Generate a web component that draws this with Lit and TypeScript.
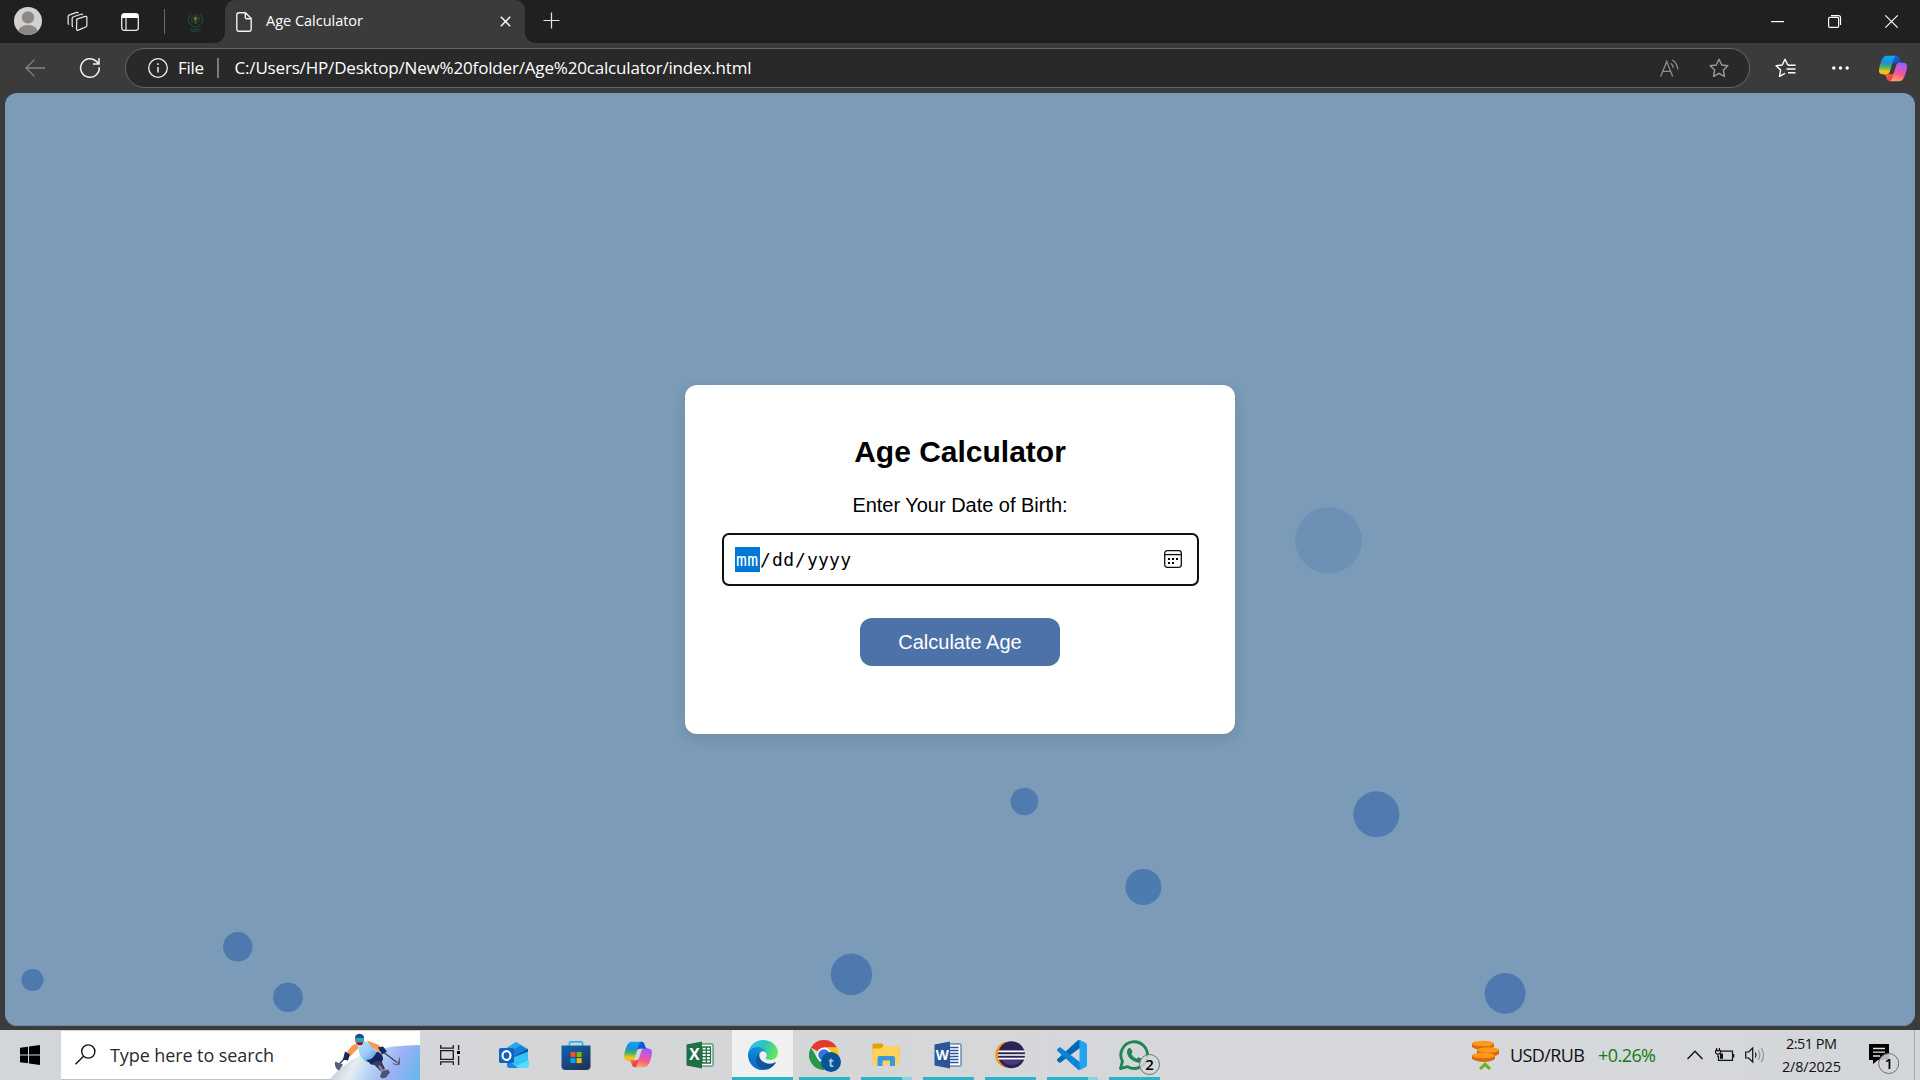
import { LitElement, html, css, svg } from "lit";
import { customElement, property, state } from "lit/decorators.js";
import { styleMap } from "lit/directives/style-map.js";
import { classMap } from "lit/directives/class-map.js";

/** One line of text tracked so that it spans an exact width. */
@customElement("fit-text")
class FitText extends LitElement {
  static styles = css`
    :host { display: block; flex: none; white-space: pre; }
    .box { display: block; }
    .run { display: inline-block; }
  `;
  @property() text = "";
  @property({ type: Number }) width = 0;
  @state() private tracking = 0;

  firstUpdated() {
    const run = this.renderRoot.querySelector(".run") as HTMLElement;
    const natural = run.getBoundingClientRect().width;
    this.tracking = (this.width - natural) / Math.max(1, this.text.length - 1);
  }
  render() {
    return html`<span class="box" style=${styleMap({ width: this.width + "px" })}
      ><span class="run" style=${styleMap({ letterSpacing: this.tracking + "px" })}>${this.text}</span></span>`;
  }
}

const copilot = (id: string) => html`
  <svg class="copilot" viewBox="2 3 44 42">
    <defs>
      <linearGradient id="${id}a" x1=".3" y1="0" x2=".25" y2="1">
        <stop offset="0" stop-color="#12a5f0" /><stop offset=".35" stop-color="#1c8fd8" />
        <stop offset=".6" stop-color="#45b06a" /><stop offset=".85" stop-color="#f0c814" /><stop offset="1" stop-color="#f7b314" />
      </linearGradient>
      <linearGradient id="${id}b" x1=".6" y1="0" x2=".35" y2="1">
        <stop offset="0" stop-color="#a05bee" /><stop offset=".25" stop-color="#c459d8" />
        <stop offset=".6" stop-color="#f4588c" /><stop offset="1" stop-color="#ffa45e" />
      </linearGradient>
      <linearGradient id="${id}c" x1="0" y1="0" x2="1" y2="1">
        <stop offset="0" stop-color="#1268d8" /><stop offset="1" stop-color="#1b3fc4" />
      </linearGradient>
      <linearGradient id="${id}d" x1="0" y1="0" x2="1" y2="1">
        <stop offset="0" stop-color="#fba03a" /><stop offset=".6" stop-color="#ee4a3d" /><stop offset="1" stop-color="#d83a6a" />
      </linearGradient>
    </defs>
    <path fill="url(#${id}c)" d="M34.142 7.325A4.63 4.63 0 0 0 29.7 4h-1.35a4.63 4.63 0 0 0-4.554 3.794L21.48 20.407l.575-1.965a4.63 4.63 0 0 1 4.444-3.33h7.853l3.294 1.282 3.175-1.283h-.926a4.63 4.63 0 0 1-4.443-3.325z" />
    <path fill="url(#${id}d)" d="M14.33 40.656A4.63 4.63 0 0 0 18.779 44h2.87a4.63 4.63 0 0 0 4.629-4.51l.312-12.163-.654 2.233a4.63 4.63 0 0 1-4.443 3.329h-7.919l-2.823-1.532-3.057 1.532h.912a4.63 4.63 0 0 1 4.447 3.344z" />
    <path fill="url(#${id}a)" d="M29.5 4H13.46c-4.583 0-7.332 6.057-9.165 12.113-2.172 7.177-5.015 16.775 3.207 16.775h6.926a4.655 4.655 0 0 0 4.48-3.358 2077 2077 0 0 1 4.86-16.71c.822-2.79 1.507-5.185 2.557-6.677C26.914 5.306 27.894 4 29.5 4z" />
    <path fill="url(#${id}b)" d="M18.498 44h16.04c4.582 0 7.332-6.058 9.165-12.115 2.171-7.178 5.014-16.777-3.208-16.777h-6.926a4.655 4.655 0 0 0-4.48 3.359 2084 2084 0 0 1-4.859 16.712c-.822 2.792-1.507 5.187-2.556 6.679-.59.838-1.57 2.142-3.176 2.142z" />
  </svg>`;

const STAR = "M10 1.2l2.75 5.75 6.15.8-4.5 4.35 1.1 6.2L10 15.3l-5.5 3 1.1-6.2L1.1 7.75l6.15-.8z";

@customElement("edge-chrome")
class EdgeChrome extends LitElement {
  static styles = css`
    :host { display: block; height: 93px; font-family: "Open Sans", "Noto Sans", sans-serif; color: #fff; }
    svg { display: block; flex: none; overflow: visible; }
    .tabs { display: flex; height: 43px; background: #202020; }
    .left { display: flex; align-items: center; width: 225px; box-sizing: border-box; padding-left: 14px; }
    .avatar { width: 28px; height: 28px; margin-bottom: 1px; }
    .spaces { width: 21px; height: 21px; margin-left: 25px; }
    .pane { width: 18px; height: 18px; margin-left: 33px; }
    .sep { width: 1px; height: 25px; background: #6a6a6a; margin-left: 25px; }
    .pinned { width: 17px; height: 21px; margin: 2px 0 0 22px; }
    .tab { position: relative; display: flex; align-items: center; width: 300px; box-sizing: border-box;
      padding-left: 11px; background: #3b3b3b; border-radius: 10px 10px 0 0; }
    .tab::before, .tab::after { content: ""; position: absolute; bottom: 0; width: 10px; height: 10px; }
    .tab::before { left: -10px; background: radial-gradient(circle at 0 0, #202020 9.5px, #3b3b3b 10px); }
    .tab::after { right: -10px; background: radial-gradient(circle at 100% 0, #202020 9.5px, #3b3b3b 10px); }
    .doc { width: 16px; height: 20px; }
    .title { font-size: 14.5px; line-height: 20px; margin: 0 0 1px 14px; }
    .close { width: 11px; height: 11px; margin-left: 137px; }
    .plus { width: 17px; height: 17px; margin: 12px 0 0 18px; }
    .window { display: flex; align-items: center; gap: 44px; margin-left: auto; padding-right: 22.5px; }
    .window svg { width: 13px; height: 13px; }
    .bar { display: flex; align-items: center; height: 50px; box-sizing: border-box; background: #3b3b3b; padding-left: 25px; }
    .back { width: 20px; height: 18px; }
    .reload { width: 20px; height: 20px; margin-left: 35px; }
    .address { display: flex; align-items: center; width: 1625px; height: 40px; margin-left: 25px; box-sizing: border-box;
      border: 1px solid #666; border-radius: 20px; background: #292929; padding: 0 20px 0 22px; }
    .info { width: 20px; height: 20px; }
    .scheme { font-size: 17px; margin: 0 0 1px 10px; }
    .pipe { width: 1.5px; height: 20px; background: #7d7d7d; margin-left: 13px; }
    .url { font-size: 17px; margin: 0 0 1px 16px; }
    .aloud { width: 19px; height: 18px; margin-left: auto; }
    .star { width: 20px; height: 20px; margin-left: 30px; }
    .favs { width: 20px; height: 20px; margin-left: 24.5px; }
    .more { width: 17px; height: 4px; margin-left: 37px; }
    .copilot { width: 28px; height: 27px; margin-left: 30.5px; }
  `;
  render() {
    return html`
      <div class="tabs">
        <div class="left">
          <svg class="avatar" viewBox="0 0 28 28">
            <clipPath id="av"><circle cx="14" cy="14" r="14" /></clipPath>
            <g clip-path="url(#av)">
              <rect width="28" height="28" fill="#d3d1cf" />
              <circle cx="14" cy="10.4" r="6.2" fill="#8c8886" />
              <ellipse cx="14" cy="25" rx="10" ry="7" fill="#8c8886" />
            </g>
          </svg>
          <svg class="spaces" viewBox="0 0 22 22" fill="none" stroke="#e6e6e6" stroke-width="1.3" stroke-linejoin="round">
            <path d="M10.2 8.6l9-2.9q1.6-.4 1.6 1.2v8.3q0 1.1-1.2 1.6l-7.8 3.3q-1.8.7-1.8-1.3z" />
            <path d="M6.4 16.7q-1-.3-1-1.5V7.8q0-1.4 1.4-1.8l8-2.6q1.2-.3 1.6.8" />
            <path d="M2.2 14.2q-1-.3-1-1.5V5.9q0-1.4 1.4-1.8l7.6-2.6q1.2-.3 1.6.8" />
          </svg>
          <svg class="pane" viewBox="0 0 18 18">
            <rect x=".7" y=".7" width="16.6" height="16.6" rx="2.5" fill="none" stroke="#ececec" stroke-width="1.3" />
            <path d="M1 5V3q0-2 2-2h12q2 0 2 2v2z" fill="#fff" />
            <path d="M5 5v12.3" stroke="#ececec" stroke-width="1.2" />
          </svg>
          <div class="sep"></div>
          <svg class="pinned" viewBox="0 0 17 21" fill="none" stroke="#1f4637" stroke-width="1.5">
            <path d="M4 1.6Q-.8 8 3.6 12.5 6 15 8.5 15t5-2.5Q17.8 8 13 1.6" stroke-dasharray="2.4 .6" />
            <circle cx="8.5" cy="7" r="4" stroke-width="1.2" />
            <path d="M8.5 7v5" stroke="#46521a" stroke-width="1.8" />
            <circle cx="8.5" cy="6.5" r="2" fill="#6d7014" stroke="none" />
            <path d="M3.5 17.5h10M4.5 19.5h8" stroke-width="1.4" stroke-dasharray="2 .6" />
          </svg>
        </div>
        <div class="tab">
          <svg class="doc" viewBox="0 0 16 20" fill="none" stroke="#f2f2f2" stroke-width="1.4" stroke-linejoin="round">
            <path d="M.8 3q0-2.2 2.2-2.2h6.5l5.7 5.7V17q0 2.2-2.2 2.2H3Q.8 19.2.8 17zM9.3 1v4.2q0 1.5 1.5 1.5h4.2" />
          </svg>
          <fit-text class="title" text="Age Calculator" width="97"></fit-text>
          <svg class="close" viewBox="0 0 11 11" stroke="#fff" stroke-width="1.4"><path d="M.8.8l9.4 9.4M10.2.8L.8 10.2" /></svg>
        </div>
        <svg class="plus" viewBox="0 0 18 18" stroke="#e4e4e4" stroke-width="1.3"><path d="M9 .5v17M.5 9h17" /></svg>
        <div class="window">
          <svg viewBox="0 0 13 13" stroke="#fff" stroke-width="1.2"><path d="M0 6.6h13" /></svg>
          <svg viewBox="0 0 13 13" fill="none" stroke="#fff" stroke-width="1.2">
            <rect x=".6" y="2.4" width="10" height="10" rx="1.2" /><path d="M3 .6h7.5q2 0 2 2V10" />
          </svg>
          <svg viewBox="0 0 13 13" stroke="#fff" stroke-width="1.2"><path d="M.3.3l12.4 12.4M12.7.3L.3 12.7" /></svg>
        </div>
      </div>
      <div class="bar">
        <svg class="back" viewBox="0 0 20 18" fill="none" stroke="#858585" stroke-width="1.3"><path d="M20 9H1M9.5.6L1 9l8.5 8.4" /></svg>
        <svg class="reload" viewBox="0 0 20 20" fill="none" stroke="#f4f4f4" stroke-width="1.5">
          <path d="M19.2 9.2A9.3 9.3 0 1 1 16.5 3.4L18.8 5.8M19 .3V6h-6" />
        </svg>
        <div class="address">
          <svg class="info" viewBox="0 0 20 20" fill="none" stroke="#f0f0f0" stroke-width="1.3">
            <circle cx="10" cy="10" r="9.3" /><path d="M10 9v5.5M10 5.3v1.7" stroke-width="1.5" />
          </svg>
          <fit-text class="scheme" text="File" width="26"></fit-text>
          <div class="pipe"></div>
          <fit-text class="url" text="C:/Users/HP/Desktop/New%20folder/Age%20calculator/index.html" width="517"></fit-text>
          <svg class="aloud" viewBox="0 0 19 18" fill="none" stroke="#8e8e8e" stroke-width="1.3">
            <path d="M.7 17.5L6.7 2.5l6 15M2.8 12.3h7.9M10.8 4.2q2.2 1.5 2.3 4.6M12.2 1q5 3 5.6 9.5" />
          </svg>
          <svg class="star" viewBox="0 0 20 20" fill="none" stroke="#9a9a9a" stroke-width="1.4" stroke-linejoin="round"><path d=${STAR} /></svg>
        </div>
        <svg class="favs" viewBox="0 0 20 20" fill="none" stroke="#fff" stroke-width="1.4" stroke-linejoin="round">
          <path d="M13.5 6.9l-.8-.1L10 1.2 7.25 6.95l-6.15.8 4.5 4.35-1.1 6.2L10 15.3" />
          <path d="M13 7.3h7.5M11.5 11h9M13 14.7h7.5" />
        </svg>
        <svg class="more" viewBox="0 0 17 4" fill="#fff"><circle cx="1.8" cy="2" r="1.7" /><circle cx="8.5" cy="2" r="1.7" /><circle cx="15.2" cy="2" r="1.7" /></svg>
        ${copilot("tb")}
      </div>`;
  }
}

const BUBBLES = [
  { x: 1328.5, y: 540.3, r: 33.3, o: 0.3 },
  { x: 1024.4, y: 801.5, r: 13.8, o: 0.94 },
  { x: 1376.4, y: 814.2, r: 23, o: 0.94 },
  { x: 1143.4, y: 887, r: 18, o: 0.98 },
  { x: 1505.1, y: 993.4, r: 20.4, o: 1 },
  { x: 851.4, y: 974.3, r: 20.7, o: 1 },
  { x: 237.8, y: 946.8, r: 14.7, o: 1 },
  { x: 288, y: 997.3, r: 14.8, o: 1 },
  { x: 32.5, y: 980, r: 11, o: 1 },
];

@customElement("age-page")
class AgePage extends LitElement {
  static styles = css`
    :host { display: flex; justify-content: center; position: relative; height: 933px; box-sizing: border-box; padding-top: 292px;
      background: #7b9bb8; border-radius: 12px; overflow: hidden; font-family: "Liberation Sans", Arial, sans-serif; color: #000;
      box-shadow: inset 0 -1px 0 #6b88a2; }
    .bubbles { position: absolute; left: 0; top: 0; width: 1910px; height: 933px; display: block; }
    .card { position: relative; display: flex; flex-direction: column; align-items: center; width: 550px; height: 349px;
      box-sizing: border-box; padding: 50px 36px 0; background: #fff; border-radius: 12px; box-shadow: 0 5px 15px rgba(0, 0, 0, 0.1); }
    .title { margin: 0; font-size: 30px; line-height: 34px; font-weight: 700; }
    .label { margin-top: 24px; font-size: 20px; line-height: 24px; letter-spacing: -0.02px; }
    .field { display: flex; align-items: center; width: 477px; height: 53px; margin: 16px 0 0 1px; box-sizing: border-box;
      border: 2px solid #101010; border-radius: 7px; padding: 0 15px 0 11px;
      font-family: "DejaVu Sans Mono", monospace; font-size: 18px; line-height: 25px; }
    .part { display: block; padding: 0 1px; }
    .active { background: #0078d7; color: #fff; padding: 0 2px 0 1px; }
    .slash { padding: 0; }
    .calendar { display: block; width: 18px; height: 18px; margin: 0 0 1px auto; }
    .button { width: 200px; height: 48px; margin-top: 32px; border: 0; border-radius: 12px; background: #4c72a8; color: #fff;
      font: 20px/24px "Liberation Sans", Arial, sans-serif; padding: 0; }
  `;
  render() {
    return html`
      <svg class="bubbles" viewBox="5 93 1910 933">
        ${BUBBLES.map((b) => svg`<circle cx=${b.x} cy=${b.y} r=${b.r} fill="#4d79ae" fill-opacity=${b.o} />`)}
      </svg>
      <div class="card">
        <h2 class="title">Age Calculator</h2>
        <label class="label">Enter Your Date of Birth:</label>
        <div class="field">
          <fit-text class="part active" text="mm" width="22"></fit-text>
          <fit-text class="part slash" text="/" width="11"></fit-text>
          <fit-text class="part" text="dd" width="22"></fit-text>
          <fit-text class="part slash" text="/" width="11"></fit-text>
          <fit-text class="part" text="yyyy" width="44"></fit-text>
          <svg class="calendar" viewBox="0 0 18 18">
            <rect x=".7" y=".7" width="16.6" height="16.6" rx="2.5" fill="none" stroke="#111" stroke-width="1.3" />
            <path d="M.7 4.6h16.6" stroke="#111" stroke-width="1.3" />
            <path d="M4 8h2v2H4zM8 8h2v2H8zM12 8h2v2h-2zM4 12h2v2H4zM8 12h2v2H8z" />
          </svg>
        </div>
        <button class="button">Calculate Age</button>
      </div>`;
  }
}

const outlook = html`<svg class="icon" viewBox="0 0 30 30">
  <path d="M8 7.5L17 2l12 7v4l-6 5-15-3z" fill="#2aa3e8" /><path d="M10 9l9-5 10 6v3l-11 6z" fill="#1280d8" />
  <path d="M8 8L17 2l5 3-12 7z" fill="#2ea6ea" />
  <path d="M14 17l15-8v4L16 21z" fill="#0a4c9e" /><path d="M8 20l21-8.5V25q0 3-3 3H11q-3 0-3-3z" fill="#34c3f2" />
  <path d="M12 28l18-8v5q0 3-3 3z" fill="#56dcff" /><path d="M8 20l11 8h-8q-3 0-3-3z" fill="#1a86dd" />
  <rect x="0" y="8" width="15" height="15" rx="1.8" fill="#0f62be" />
  <ellipse cx="7.5" cy="15.5" rx="4" ry="4.4" fill="none" stroke="#fff" stroke-width="2.1" /></svg>`;

const store = html`<svg class="icon" viewBox="0 0 30 30">
  <defs><linearGradient id="st" x1="0" y1="0" x2=".6" y2="1"><stop offset="0" stop-color="#0f64b4" /><stop offset="1" stop-color="#20365e" /></linearGradient></defs>
  <path d="M8.500 6V3q0-1.200 1.200-1.200h10.600q1.200 0 1.200 1.200v3" fill="none" stroke="#2bb4ee" stroke-width="1.700" />
  <path d="M.5 5.500h29V26q0 4-4 4h-21q-4 0-4-4z" fill="url(#st)" />
  <path d="M9.500 12h5v5h-5z" fill="#f25022" /><path d="M15.600 12h5v5h-5z" fill="#7fba00" />
  <path d="M9.500 18.100h5v5h-5z" fill="#00a4ef" /><path d="M15.600 18.100h5v5h-5z" fill="#ffb900" /></svg>`;

const office = (glyph: string, dark: string, sheet: unknown) => html`<svg class="icon" viewBox="0 0 30 30">
  <rect x="14" y="4" width="14" height="22" rx=".8" fill="#fff" stroke=${dark} stroke-width="1" />${sheet}
  <path d="M1.500 4.500L17 1.500v27l-15.500-3z" fill=${dark} />
  <text class=${"glyph glyph-" + glyph.toLowerCase()} x="9.300" y="20.300" text-anchor="middle" fill="#fff">${glyph}</text></svg>`;

const excelSheet = svg`<path d="M17 7h8.500v16H17zM17 10.200h8.500M17 13.400h8.500M17 16.600h8.500M17 19.800h8.500M21.300 7v16" fill="none" stroke="#1f7044" stroke-width="1.300" />`;
const wordSheet = svg`<path d="M17 7.500h8.500M17 10.500h8.500M17 13.500h8.500M17 16.500h8.500M17 19.500h8.500M17 22.500h8.500" stroke="#2a5699" stroke-width="1.500" />`;

const edge = html`<svg class="icon" viewBox="0 0 256 256">
  <defs>
    <linearGradient id="e1" x1=".2" y1=".5" x2="1" y2=".6"><stop offset="0" stop-color="#0c59a4" /><stop offset="1" stop-color="#114a8b" /></linearGradient>
    <linearGradient id="e2" x1=".8" y1="0" x2=".3" y2="1"><stop offset="0" stop-color="#1b9de2" /><stop offset=".5" stop-color="#0f80d3" /><stop offset="1" stop-color="#0a66bd" /></linearGradient>
    <linearGradient id="e3" x1="0" y1=".3" x2="1" y2=".6"><stop offset="0" stop-color="#35c1f1" /><stop offset=".5" stop-color="#2fc3b8" /><stop offset="1" stop-color="#66eb55" /></linearGradient>
  </defs>
  <path fill="url(#e1)" d="M231 190.500c-3.400 1.800-6.900 3.400-10.500 4.700-11.500 4.300-23.600 6.500-35.900 6.500-47.300 0-88.500-32.500-88.500-74.300.1-11.400 6.400-21.900 16.400-27.300-42.800 1.800-53.800 46.400-53.800 72.500 0 73.900 68.100 81.400 82.800 81.400 7.900 0 19.800-2.300 27-4.600l1.300-.4c27.600-9.500 51-28.100 66.600-52.800 1.200-1.900.6-4.300-1.200-5.500-1.300-.8-2.900-.9-4.200-.2z" />
  <path fill="url(#e2)" d="M105.700 241.400c-8.900-5.500-16.600-12.800-22.700-21.300-26.300-36-18.400-86.500 17.600-112.800 3.800-2.700 7.700-5.200 11.900-7.200 3.100-1.500 8.400-4.100 15.500-4 10.100.1 19.600 4.900 25.700 13 4 5.400 6.300 11.900 6.400 18.700 0-.2 24.500-79.600-80-79.600-43.900 0-80 41.700-80 78.200-.2 19.300 4 38.500 12.100 56 27.600 58.800 94.800 87.600 156.400 67.100-21.100 6.600-44.100 3.700-62.900-8.100z" />
  <path fill="url(#e3)" d="M152.300 148.900c-.9 1-3.400 2.500-3.400 5.600 0 2.600 1.700 5.200 4.800 7.300 14.300 10 41.400 8.600 41.500 8.600 10.700 0 21.100-2.900 30.300-8.300 18.800-11 30.400-31.100 30.400-52.900.3-22.400-8-37.300-11.300-43.900C223.500 23.900 177.700 0 128 0 58 0 1 56.200 0 126.200c.5-36.500 36.800-66 80-66 3.500 0 23.500.3 42 10.100 16.300 8.600 24.900 18.900 30.800 29.200 6.200 10.700 7.300 24.100 7.300 29.500 0 5.300-2.700 13.300-7.800 19.900z" />
</svg>`;

const chrome = html`<svg class="icon big" viewBox="0 0 32 32">
  <path d="M15 15L2 7.500A15 15 0 0 1 28 7.500H15z" fill="#e33b2e" />
  <path d="M28 7.500A15 15 0 0 1 15 30l6.500-11.300L15 7.500z" fill="#fcc31e" />
  <path d="M2 7.500A15 15 0 0 0 15 30l6.500-11.300L15 15 8.500 18.700z" fill="#27974a" />
  <circle cx="15" cy="15" r="7.400" fill="#fff" /><circle cx="15" cy="15" r="5.800" fill="#2f74e2" />
  <circle cx="22" cy="22" r="10" fill="#0b5394" />
  <text class="tee" x="22" y="26.500" text-anchor="middle" fill="#a9cde6">t</text></svg>`;

const explorer = html`<svg class="icon" viewBox="0 0 30 30">
  <path d="M1.500 5q0-1.500 1.500-1.500h8l2.500 3H27q1.500 0 1.500 1.500v6h-27z" fill="#e2a008" />
  <path d="M1.500 8.500H10L12.500 6H27q1.500 0 1.500 1.500V25H1.500z" fill="#fcd25a" />
  <path d="M6.500 26v-8q0-2 2-2h13.500q2 0 2 2v8h-5v-5.500h-7.500V26z" fill="#3a97dd" /></svg>`;

const eclipse = html`<svg class="icon" viewBox="0 0 30 30">
  <path d="M11 1.500a13.500 13.500 0 0 0 0 26.500L14 15z" fill="#f7941e" /><circle cx="16.500" cy="14.700" r="13.500" fill="#2c2255" />
  <path d="M7 20h19.500q-3 5-9.500 5t-10-5z" fill="#463a85" />
  <path d="M3.200 11.300h26.600M3 15h27M3.200 18.700h26.600" stroke="#fff" stroke-width="1.700" /></svg>`;

const vscode = html`<svg class="icon" viewBox="0 0 100 100">
  <path fill="#0069b0" d="M96.460 10.800L75.857.876a6.230 6.230 0 0 0-7.107 1.207L1.300 63.583a4.167 4.167 0 0 0 .004 6.162l5.510 5.009a4.167 4.167 0 0 0 5.320.237L75 27.300z" />
  <path fill="#0a84d6" d="M96.460 89.201l-20.603 9.921a6.230 6.230 0 0 1-7.107-1.207L1.300 36.415a4.167 4.167 0 0 1 .004-6.162l5.510-5.009a4.167 4.167 0 0 1 5.320-.237L75 72.700z" />
  <path fill="#26a2f2" d="M75.858 99.126a6.230 6.230 0 0 1-7.108-1.210c2.306 2.307 6.250.674 6.250-2.588V4.672c0-3.262-3.944-4.895-6.250-2.589a6.230 6.230 0 0 1 7.108-1.210l20.600 9.908A6.250 6.250 0 0 1 100 16.413v67.174a6.250 6.250 0 0 1-3.541 5.633z" /></svg>`;

const whatsapp = html`<svg class="icon wide" viewBox="0 0 42 36">
  <path d="M1.500 28.500l1.900-7.200A13.300 13.300 0 1 1 8.700 26.700z" fill="none" stroke="#1b8755" stroke-width="2.900" stroke-linejoin="round" />
  <path d="M9.500 8.200q1.200-.7 2.200.2l1.800 3.200q.2.900-1.200 2.400 2 3.500 5.300 4.800 1.600-1.800 2.200-1.600l3.200 1.700q.9.700-.2 2.500-1.500 1.800-4.300 1.200-8.300-2.200-10.600-9.400-.4-3.300 1.600-5z" fill="#1b8755" />
  <circle cx="30.500" cy="24.500" r="10" fill="#d6d8da" fill-opacity=".86" stroke="#6d6d6d" stroke-width="1" />
  <text class="count" x="30.500" y="30" text-anchor="middle">2</text></svg>`;

const APPS = [
  { icon: outlook, state: "" },
  { icon: store, state: "" },
  { icon: copilot("tk"), state: "" },
  { icon: office("X", "#1f7044", excelSheet), state: "" },
  { icon: edge, state: "focus" },
  { icon: chrome, state: "open" },
  { icon: explorer, state: "multi" },
  { icon: office("W", "#2a5699", wordSheet), state: "open" },
  { icon: eclipse, state: "open" },
  { icon: vscode, state: "multi" },
  { icon: whatsapp, state: "open" },
];

@customElement("task-bar")
class TaskBar extends LitElement {
  static styles = css`
    :host { display: flex; height: 50px; background: linear-gradient(90deg, #d3d6d9, #d5d6d8 40%, #d6d8db 80%, #d3d6d9);
      font-family: "Open Sans", "Noto Sans", sans-serif; color: #111; }
    svg { display: block; flex: none; }
    .start { display: flex; align-items: center; width: 61px; box-sizing: border-box; padding-left: 20px; }
    .win { width: 20px; height: 20px; }
    .search { position: relative; display: flex; align-items: center; width: 359px; height: 49px; margin-top: 1px; box-sizing: border-box;
      background: #fff; border-bottom: 1px solid #bfc1c3; padding-left: 14px; }
    .lens { width: 21px; height: 21px; margin-bottom: 1px; }
    .hint { font-size: 18px; margin-left: 14px; color: #2b2b2b; }
    .skier { width: 91px; height: 49px; margin: 1px 0 0 auto; }
    .view { width: 21px; height: 20px; margin: 15px 0 0 20px; }
    .apps { display: grid; grid-template-columns: repeat(11, 62px); margin-left: 22px; }
    .app { display: flex; flex-direction: column; align-items: center; justify-content: space-between; padding-top: 10px; box-sizing: border-box; }
    .focus { background: #f0f0f0; margin-left: 1px; }
    .icon { width: 30px; height: 30px; }
    .big { width: 32px; height: 32px; margin-right: -2px; }
    .wide { width: 42px; height: 36px; margin-right: -12px; }
    .copilot { width: 28px; height: 27px; margin-top: 1px; }
    .line { display: flex; width: 51px; height: 3px; }
    .open .line { background: #2bb3cc; }
    .focus .line { width: 61px; background: #2bb3cc; }
    .multi .line { background: linear-gradient(90deg, #2bb3cc 41px, #86d2de 41px); }
    .glyph { font-family: "Open Sans", sans-serif; font-weight: 700; }
    .glyph-x { font-size: 15.5px; }
    .glyph-w { font-size: 13.5px; }
    .tee { font: 700 12px "Open Sans", sans-serif; }
    .count { font: 600 15px "Open Sans", sans-serif; }
    .tray { display: flex; align-items: center; margin-left: auto; }
    .coins { width: 29px; height: 30px; }
    .pair { font-size: 18px; margin-left: 10px; }
    .gain { font-size: 18px; margin-left: 13px; color: #107c10; }
    .caret { width: 16px; height: 10px; margin-left: 31px; }
    .battery { width: 20px; height: 14px; margin-left: 12px; }
    .volume { width: 21px; height: 18px; margin-left: 10px; }
    .clock { display: flex; flex-direction: column; align-items: center; width: 59px; margin: -1px 0 0 16px; font-size: 14.5px; line-height: 23px; }
    .note { width: 31px; height: 31px; margin: 9px 0 0 28px; }
    .desktop { width: 5px; height: 50px; margin-left: 14px; border-left: 1px solid #a9abad; }
  `;
  render() {
    return html`
      <div class="start">
        <svg class="win" viewBox="0 0 20 20"><path d="M0 2.800l8-1.100v7.800H0zM9 1.600L20 0v9.500H9zM0 10.500h8v7.800l-8-1.100zM9 10.500h11V20L9 18.400z" /></svg>
      </div>
      <div class="search">
        <svg class="lens" viewBox="0 0 21 21" fill="none" stroke="#111" stroke-width="1.400"><circle cx="13.300" cy="7.500" r="6.600" /><path d="M8.500 12.300L.5 20.300" /></svg>
        <fit-text class="hint" text="Type here to search" width="164"></fit-text>
        <svg class="skier" viewBox="0 0 91 49">
          <defs>
            <linearGradient id="hill" x1="0" y1=".4" x2="1" y2=".6">
              <stop offset="0" stop-color="#b9bdc6" /><stop offset=".3" stop-color="#e6edf1" /><stop offset=".5" stop-color="#b5d3f3" />
              <stop offset=".72" stop-color="#9fb1f4" /><stop offset="1" stop-color="#6fb6ef" />
            </linearGradient>
            <linearGradient id="shirt" x1="0" y1="0" x2="1" y2="1"><stop offset="0" stop-color="#b9dcf8" /><stop offset=".5" stop-color="#9fd0f7" /><stop offset="1" stop-color="#4b8fe0" /></linearGradient>
          </defs>
          <path d="M0 49Q18 28 42 20 64 14 91 14V49z" fill="url(#hill)" />
          <g transform="translate(0 1.500)">
            <g stroke="#3d4660" fill="none" stroke-width="1.500"><path d="M22 19L9 33M55 20L68 30" /></g>
            <path d="M6 29l8 3-4 6q-3-1-4-5zM71 24l-3 8-5-2q2 4 8 2z" fill="#56607a" />
            <path d="M29 10l-6 3-6 8 4 3 8-8zM38 8l11 4 6 5-4 3-10-6z" fill="#f79a55" />
            <path d="M16 19l5 3-2 6-5-1zM49 15l5-1 4 5-5 3z" fill="#1a2758" />
            <path d="M28 9q6-2 11 1l8 9q2 5-2 9l-7 2q-7-4-8-11z" fill="url(#shirt)" />
            <path d="M37 27q6 2 11-8 6 2 6 8l-3 6-9-1z" fill="#15245c" />
            <path d="M43 30l9-2 4 8-4 3z" fill="#343d61" />
            <path d="M50 33l4 6 3-2" fill="none" stroke="#8a91a8" stroke-width="2" />
            <path d="M53 39l6-2 2 3-4 5-4 1-2-2z" fill="#4b5470" />
            <circle cx="30.500" cy="7.500" r="4.500" fill="#e84a5d" /><path d="M26 6.500q-.5-5 4.500-5.300 5 .3 4.500 5.300z" fill="#164f86" />
            <path d="M26 5.500h9v3q-4.500 2-9 0z" fill="#2aa6c2" /><path d="M27.500 9.500q3 1.500 6.500 0l-1 3h-4z" fill="#5d1f38" />
          </g>
        </svg>
      </div>
      <svg class="view" viewBox="0 0 21 20" fill="none" stroke="#1b1b1b" stroke-width="1.300">
        <path d="M.7 0v3.200h12.600V0M.7 20v-3.200h12.600V20M.7 5.700h12.600v8.600H.7zM18.600 0v5M18.600 11v9" /><path d="M17 6h3v3h-3z" fill="#000" stroke="none" />
      </svg>
      <div class="apps">
        ${APPS.map((a) => html`<div class=${classMap({ app: true, focus: a.state === "focus", open: a.state === "open", multi: a.state === "multi" })}>
          ${a.icon}<div class="line"></div></div>`)}
      </div>
      <div class="tray">
        <svg class="coins" viewBox="0 0 29 30">
          <g fill="#d96a0a"><path d="M1 15v4q5 3 12 3t11-3v-4zM6 9v5q4 3 11 3t11-3V9zM1 3v4q4 3 11 3t11-3V3z" /></g>
          <g fill="#fb9a1a"><ellipse cx="12.500" cy="15.500" rx="11.500" ry="2.800" /><ellipse cx="17" cy="10" rx="11" ry="2.800" /><ellipse cx="12" cy="3.500" rx="11" ry="2.800" /></g>
          <path d="M8 28l6-6 6 6-2 2-4-3.500L10 30z" fill="#69b319" />
        </svg>
        <fit-text class="pair" text="USD/RUB" width="75"></fit-text>
        <fit-text class="gain" text="+0.26%" width="58"></fit-text>
        <svg class="caret" viewBox="0 0 16 10" fill="none" stroke="#111" stroke-width="1.400"><path d="M.5 9L8 1.300 15.500 9" /></svg>
        <svg class="battery" viewBox="0 0 20 14" fill="none" stroke="#111" stroke-width="1.200">
          <path d="M6 3.200h11.500v9.200H3.500V8M18.700 6v3.600" /><path d="M1.600 0v2.500M4.400 0v2.500M.5 2.700h5v1.500q0 1.800-2.500 1.800T.5 4.200zM3 6v3" /><path d="M5 5.500h3v5.300H5z" fill="#111" stroke="none" />
        </svg>
        <svg class="volume" viewBox="0 0 21 18" fill="none" stroke="#111" stroke-width="1.200">
          <path d="M.7 6h3l4-4v14l-4-4h-3zM10.300 6.500q1.500 2.500 0 5" /><path d="M13.300 4.200q3 4.800 0 9.600M16.300 2q4.500 7 0 14" stroke="#909294" />
        </svg>
        <div class="clock">
          <fit-text text="2:51 PM" width="51"></fit-text>
          <fit-text text="2/8/2025" width="59"></fit-text>
        </div>
        <svg class="note" viewBox="0 0 31 31">
          <path d="M0 0h20v16H9l-5 4v-4H0z" /><path d="M4 4.500h12M4 8.200h12M4 12h7" stroke="#dfe1e3" stroke-width="1.300" />
          <circle cx="19.700" cy="19.500" r="10" fill="#d3d5d8" fill-opacity=".86" stroke="#6d6d6d" stroke-width="1" />
          <text class="count" x="19.700" y="25" text-anchor="middle">1</text>
        </svg>
        <div class="desktop"></div>
      </div>`;
  }
}

@customElement("app-root")
class AppRoot extends LitElement {
  static styles = css`
    :host { display: flex; flex-direction: column; width: 1920px; height: 1080px; overflow: hidden; background: #3b3b3b; }
    .page { margin: 0 5px 4px; }
  `;
  render() {
    return html`<edge-chrome></edge-chrome><age-page class="page"></age-page><task-bar></task-bar>`;
  }
}
